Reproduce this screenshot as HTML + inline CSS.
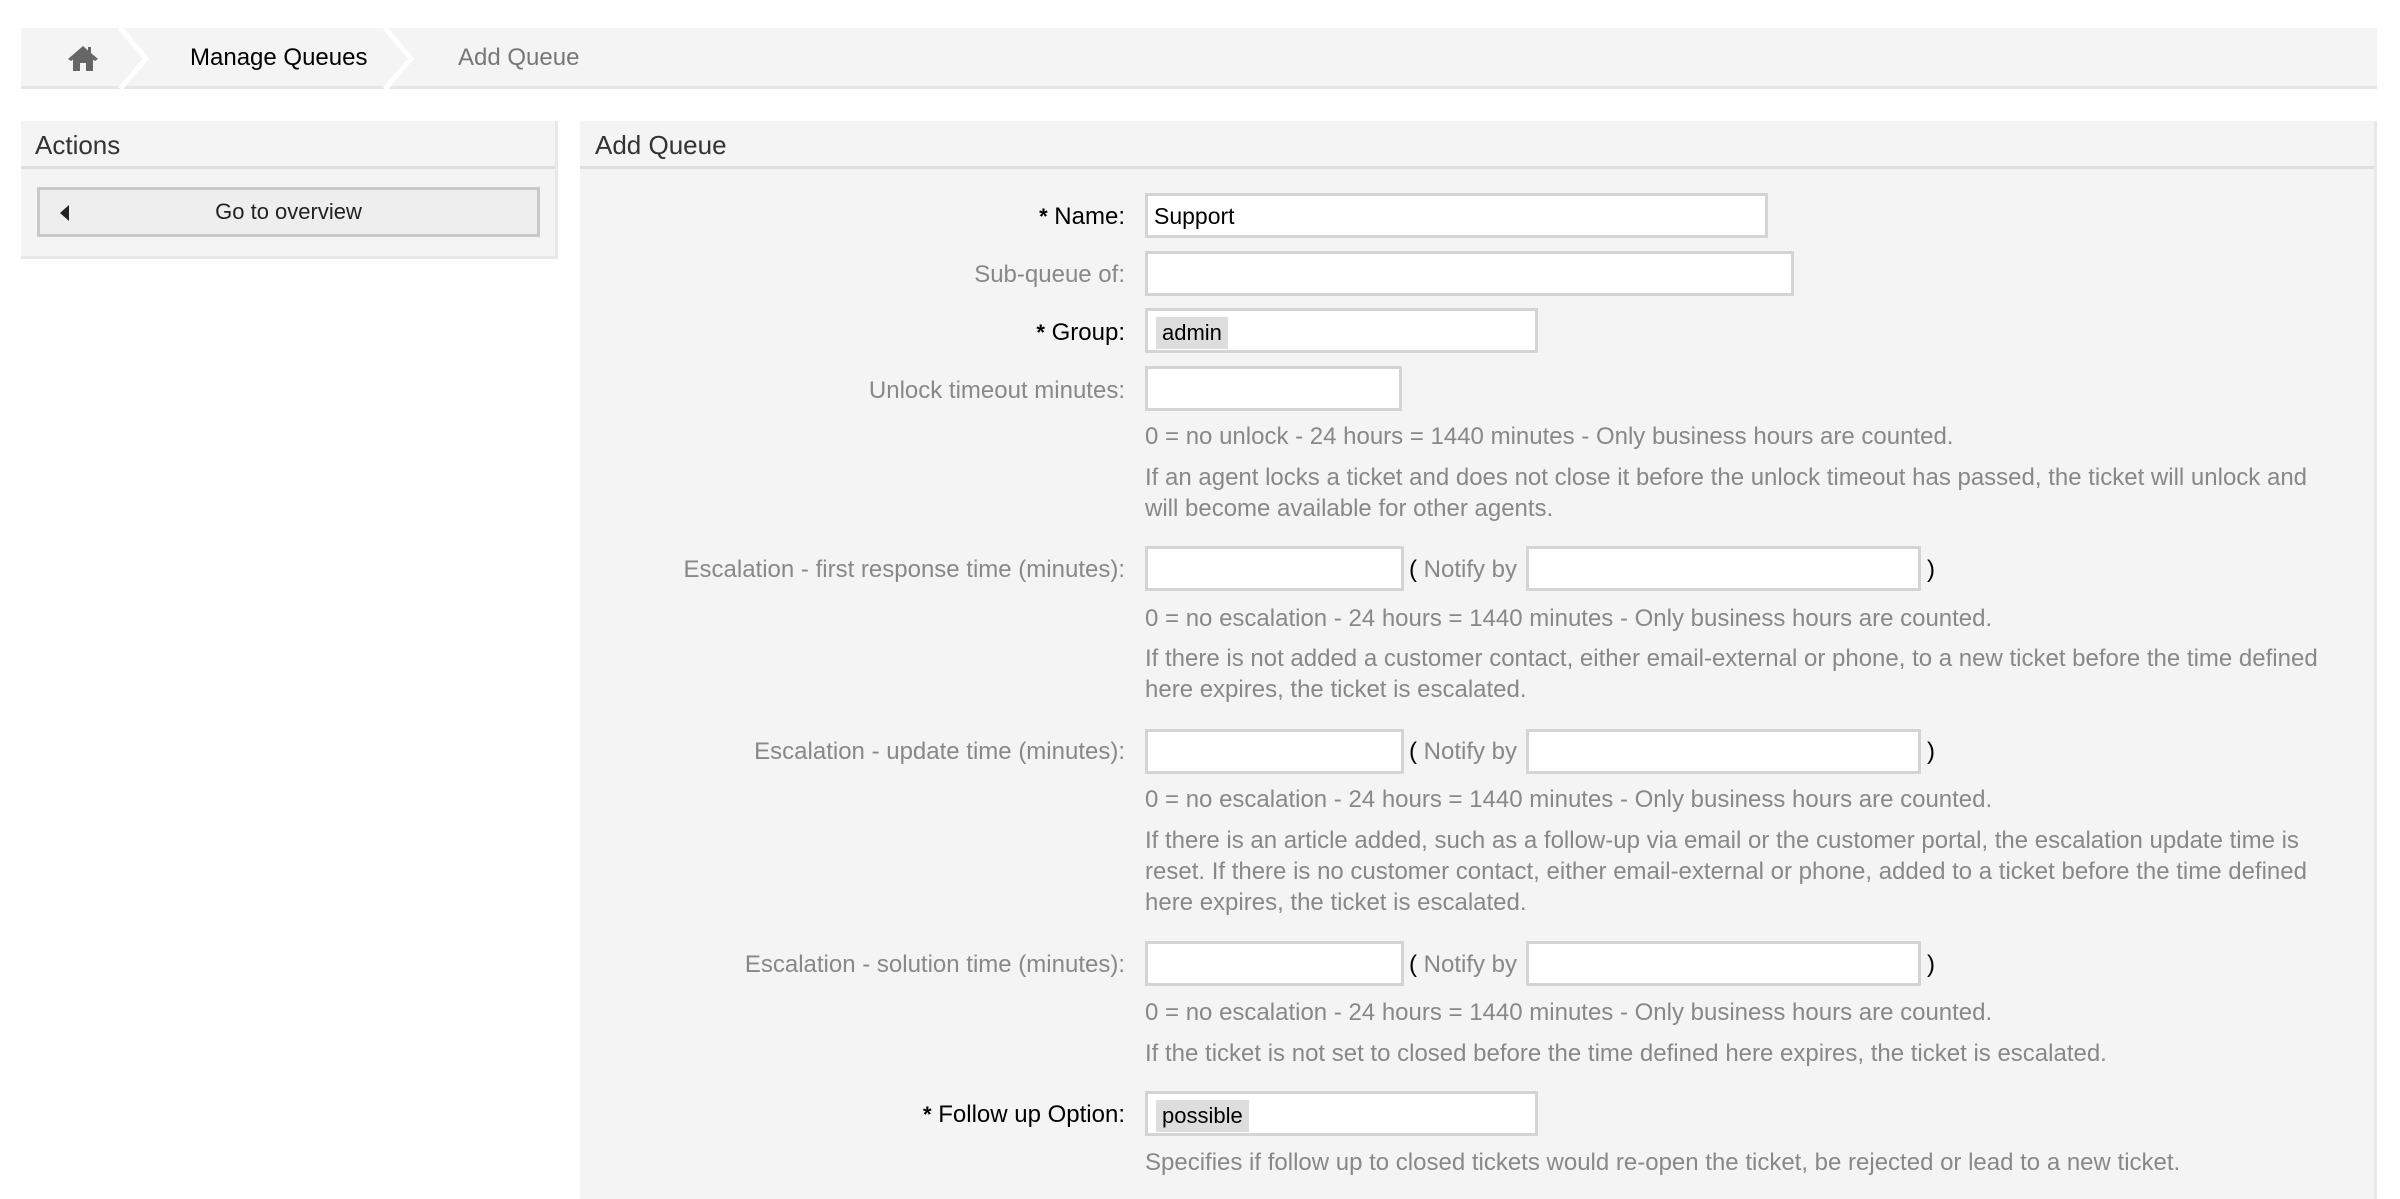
<!DOCTYPE html>
<html><head><meta charset="utf-8"><style>
*{box-sizing:border-box;margin:0;padding:0}
html,body{width:2400px;height:1199px;overflow:hidden}
body{background:#fff;font-family:"Liberation Sans",Arial,sans-serif;position:relative;color:#000}
.a{position:absolute}
.bc{left:21px;top:28px;width:2356px;height:61px;background:#f4f4f4;border-bottom:3px solid #e6e6e6}
.bc span{position:absolute;top:16px;font-size:24px}
.panel{background:#f4f4f4;border-right:3px solid #e8e8e8;border-bottom:3px solid #e8e8e8}
.ph{position:absolute;left:0;right:0;top:0;height:48px;border-bottom:3px solid #dedede}
.ph span{position:absolute;left:14px;top:9px;font-size:26px;color:#333}
.lbl{position:absolute;right:1275px;font-size:24px;color:#888;white-space:nowrap;text-align:right}
.req{color:#000}
.req i{font-style:normal;font-weight:bold;font-size:22px}
.inp{position:absolute;background:#fff;border:3px solid #d4d4d4;height:45px}
.tx{position:absolute;left:1145px;font-size:24px;color:#888;line-height:31px;width:1192px}
.tag{position:absolute;left:8px;top:6px;background:#ddd;font-size:22px;padding:3px 6px;color:#000}
.nb{position:absolute;font-size:24px;color:#888}
.nb b{color:#000;font-weight:normal}
</style></head><body>
<div class="a bc">
<svg class="a" style="left:46px;top:16px" width="32" height="28" viewBox="0 0 32 28"><path d="M16 2 L1 15 L4 17 L6 15.5 V27 H13 V19 H19 V27 H26 V15.5 L28 17 L31 15 L24 9 V3 H21 V6.5 Z" fill="#666"/></svg>
<svg class="a" style="left:95px;top:0" width="40" height="61"><polyline points="4,0 30,30.5 4,61" fill="none" stroke="#fff" stroke-width="5"/></svg>
<span style="left:169px">Manage Queues</span>
<svg class="a" style="left:360px;top:0" width="40" height="61"><polyline points="4,0 30,30.5 4,61" fill="none" stroke="#fff" stroke-width="5"/></svg>
<span style="left:437px;color:#777">Add Queue</span>
</div>

<div class="a panel" style="left:21px;top:121px;width:537px;height:138px">
<div class="ph"><span>Actions</span></div>
<div class="a" style="left:16px;top:66px;width:503px;height:50px;background:#eee;border:3px solid #c8c8c8;font-size:22px;text-align:center;line-height:44px;color:#222">Go to overview
<svg class="a" style="left:20px;top:15px" width="10" height="16"><path d="M9 0 V16 L0 8 Z" fill="#222"/></svg></div>
</div>

<div class="a panel" style="left:580px;top:121px;width:1797px;height:1078px;border-bottom:none">
<div class="ph"><span style="left:15px">Add Queue</span></div>
</div>

<div class="lbl req" style="top:203px"><i>*</i> Name:</div>
<div class="inp" style="left:1145px;top:193px;width:623px"><span class="a" style="left:6px;top:7px;font-size:23px">Support</span></div>
<div class="lbl" style="top:261px">Sub-queue of:</div>
<div class="inp" style="left:1145px;top:251px;width:649px"></div>
<div class="lbl req" style="top:319px"><i>*</i> Group:</div>
<div class="inp" style="left:1145px;top:308px;width:393px"><span class="tag">admin</span></div>
<div class="lbl" style="top:377px">Unlock timeout minutes:</div>
<div class="inp" style="left:1145px;top:366px;width:257px"></div>
<div class="tx" style="top:421px">0 = no unlock - 24 hours = 1440 minutes - Only business hours are counted.</div>
<div class="tx" style="top:462px">If an agent locks a ticket and does not close it before the unlock timeout has passed, the ticket will unlock and will become available for other agents.</div>

<div class="lbl" style="top:556px">Escalation - first response time (minutes):</div>
<div class="inp" style="left:1145px;top:546px;width:259px"></div>
<div class="nb" style="left:1409px;top:556px"><b>(</b> Notify by</div>
<div class="inp" style="left:1526px;top:546px;width:395px"></div>
<div class="nb" style="left:1927px;top:556px"><b>)</b></div>
<div class="tx" style="top:603px">0 = no escalation - 24 hours = 1440 minutes - Only business hours are counted.</div>
<div class="tx" style="top:643px">If there is not added a customer contact, either email-external or phone, to a new ticket before the time defined here expires, the ticket is escalated.</div>

<div class="lbl" style="top:738px">Escalation - update time (minutes):</div>
<div class="inp" style="left:1145px;top:729px;width:259px"></div>
<div class="nb" style="left:1409px;top:738px"><b>(</b> Notify by</div>
<div class="inp" style="left:1526px;top:729px;width:395px"></div>
<div class="nb" style="left:1927px;top:738px"><b>)</b></div>
<div class="tx" style="top:784px">0 = no escalation - 24 hours = 1440 minutes - Only business hours are counted.</div>
<div class="tx" style="top:825px">If there is an article added, such as a follow-up via email or the customer portal, the escalation update time is reset. If there is no customer contact, either email-external or phone, added to a ticket before the time defined here expires, the ticket is escalated.</div>

<div class="lbl" style="top:951px">Escalation - solution time (minutes):</div>
<div class="inp" style="left:1145px;top:941px;width:259px"></div>
<div class="nb" style="left:1409px;top:951px"><b>(</b> Notify by</div>
<div class="inp" style="left:1526px;top:941px;width:395px"></div>
<div class="nb" style="left:1927px;top:951px"><b>)</b></div>
<div class="tx" style="top:997px">0 = no escalation - 24 hours = 1440 minutes - Only business hours are counted.</div>
<div class="tx" style="top:1038px">If the ticket is not set to closed before the time defined here expires, the ticket is escalated.</div>

<div class="lbl req" style="top:1101px"><i>*</i> Follow up Option:</div>
<div class="inp" style="left:1145px;top:1091px;width:393px"><span class="tag">possible</span></div>
<div class="tx" style="top:1147px">Specifies if follow up to closed tickets would re-open the ticket, be rejected or lead to a new ticket.</div>
</body></html>
